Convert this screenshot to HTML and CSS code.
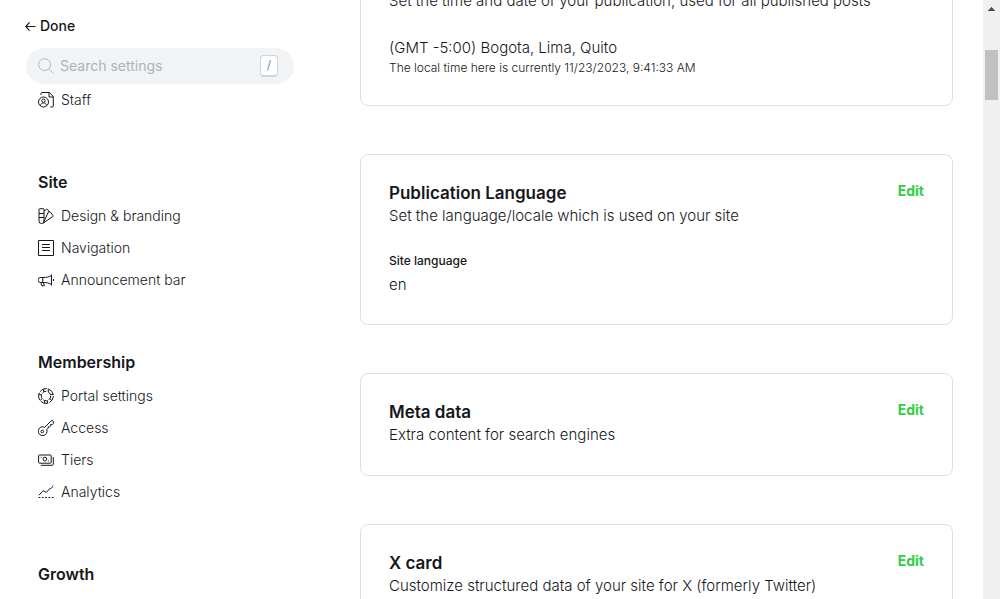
FILE: index.html
```html
<!DOCTYPE html>
<html lang="en">
<head>
<meta charset="utf-8">
<meta name="viewport" content="width=device-width, initial-scale=1">
<title>Settings</title>
<link rel="stylesheet" href="styles.css">
</head>
<body>
<div class="app">
  <aside class="sidebar">
    <button class="done" type="button">
      <svg class="done-icon" viewBox="0 0 12 12" aria-hidden="true"><path d="M11.500 6H.8M5 1.500.8 6 5 10.500"/></svg>
      Done
    </button>
    <label class="search">
      <svg class="search-icon" viewBox="0 0 17 17" aria-hidden="true"><circle cx="7" cy="7" r="6.3"/><path d="m11.6 11.6 4.8 4.8"/></svg>
      <input class="search-input" type="text" placeholder="Search settings" aria-label="Search settings">
      <kbd class="search-key">/</kbd>
    </label>
    <nav class="nav">
      <section class="nav-group">
        <a class="nav-item" href="#staff">
          <svg class="icon" viewBox="0 0 16 16" aria-hidden="true"><path d="M3 3V1.5a1 1 0 0 1 1-1h7.3l4 4V14a1 1 0 0 1-1 1h-2M11 .5V5h4.500"/><circle cx="5.500" cy="10" r="5"/><circle cx="5.500" cy="8.700" r="1.700"/><path d="M2.500 13.600c.4-2 1.500-2.700 3-2.700s2.600.7 3 2.700"/></svg>
          Staff
        </a>
      </section>
      <section class="nav-group">
        <h2 class="nav-title">Site</h2>
        <a class="nav-item" href="#design">
          <svg class="icon" viewBox="0 0 16 16" aria-hidden="true"><path d="M1 1.500a.8.8 0 0 1 .8-.8h3.400a.8.8 0 0 1 .8.8V13a2.500 2.500 0 0 1-5 0zM1 5.500h5M1 9.500h5M6 3l2.600-1.700a.8.8 0 0 1 1.100.2l1 1.800L5.600 14.400M10.700 3.900l1.500-.1 2.800 3.800a.8.8 0 0 1-.1 1L5 15.200"/><path d="M3.500 12.800v.4"/></svg>
          Design &amp; branding
        </a>
        <a class="nav-item" href="#navigation">
          <svg class="icon" viewBox="0 0 16 16" aria-hidden="true"><path d="M.5.5h15v15H.5zM4 4.500h8M4 7.500h8M4 10.500h8"/></svg>
          Navigation
        </a>
        <a class="nav-item" href="#announcement">
          <svg class="icon" viewBox="0 0 16 16" aria-hidden="true"><path d="M13.500 2.500v11M13.500 3.400C11 5.200 8 5.500 5 5.500H2.500a2.200 2.200 0 0 0 0 5H5c3 0 6 .3 8.500 2.100M4.800 5.500v5M2.800 10.500l1 3.300h2.600l-1-3.300M15.500 7v2"/></svg>
          Announcement bar
        </a>
      </section>
      <section class="nav-group">
        <h2 class="nav-title">Membership</h2>
        <a class="nav-item" href="#portal">
          <svg class="icon" viewBox="0 0 16 16" aria-hidden="true"><circle cx="8" cy="8" r="7.400" stroke-dasharray="7.900 1.400"/><circle cx="8" cy="8" r="4.700" stroke-dasharray="4.200 1.700"/><path d="M5.700.9v3M10.300.9v3M.8 6.300l2.700.6M15.200 6.300l-2.700.6M2.200 12.300l2.200-1.700M13.800 12.300l-2.200-1.700M6.600 15v-2.600M9.400 15v-2.600"/></svg>
          Portal settings
        </a>
        <a class="nav-item" href="#access">
          <svg class="icon" viewBox="0 0 16 16" aria-hidden="true"><path d="M6.700 7.300 13 1a1.500 1.500 0 0 1 2.300.3v2.200l-1 1h-1.600V6l-1 .8h-1.500v1.500l-1.500 1.200a4.400 4.400 0 1 1-2-2.200z"/><circle cx="4.300" cy="11.500" r="1.300"/></svg>
          Access
        </a>
        <a class="nav-item" href="#tiers">
          <svg class="icon" viewBox="0 0 16 16" aria-hidden="true"><rect x=".6" y="3" width="12.600" height="8.200" rx=".8"/><circle cx="6.900" cy="7.100" r="1.900"/><path d="M2.800 5.200h.8M10.200 9h.8M15.300 5v7.300a1 1 0 0 1-1 1H2.800"/></svg>
          Tiers
        </a>
        <a class="nav-item" href="#analytics">
          <svg class="icon" viewBox="0 0 16 16" aria-hidden="true"><path d="m1 11.200 3.300-3.800a1.300 1.300 0 0 1 1.600-.3l1.700.9a1.300 1.300 0 0 0 1.700-.4l1.500-2.200a2 2 0 0 1 1.200-.7c1.200-.2 2-1 2.500-2.200L15 1.500"/><path d="M.5 13.500h15" stroke-dasharray="1.800 1.500"/></svg>
          Analytics
        </a>
      </section>
      <section class="nav-group">
        <h2 class="nav-title">Growth</h2>
      </section>
    </nav>
  </aside>

  <main class="content">
    <section class="card card-scrolled">
      <div class="card-body">
        <p class="card-text">Set the time and date of your publication, used for all published posts</p>
        <div class="field">
          <p class="field-value">(GMT -5:00) Bogota, Lima, Quito</p>
          <p class="field-hint">The local time here is currently 11/23/2023, 9:41:33 AM</p>
        </div>
      </div>
    </section>
    <section class="card">
      <div class="card-body">
        <h2 class="card-title">Publication Language</h2>
        <p class="card-text">Set the language/locale which is used on your site</p>
        <div class="field">
          <h3 class="field-label">Site language</h3>
          <p class="field-value">en</p>
        </div>
      </div>
      <button class="edit" type="button">Edit</button>
    </section>
    <section class="card">
      <div class="card-body">
        <h2 class="card-title">Meta data</h2>
        <p class="card-text">Extra content for search engines</p>
      </div>
      <button class="edit" type="button">Edit</button>
    </section>
    <section class="card">
      <div class="card-body">
        <h2 class="card-title">X card</h2>
        <p class="card-text">Customize structured data of your site for X (formerly Twitter)</p>
      </div>
      <button class="edit" type="button">Edit</button>
    </section>
  </main>

  <div class="scrollbar" aria-hidden="true">
    <svg class="scroll-arrow" viewBox="0 0 17 17"><path d="M8 7h1v1h1v1h1v1h1v1H5v-1h1V9h1V8h1z"/></svg>
    <div class="scroll-track"><div class="scroll-thumb"></div></div>
    <svg class="scroll-arrow" viewBox="0 0 17 17"><path d="M5 7h7v1h-1v1h-1v1H9v1H8v-1H7V9H6V8H5z"/></svg>
  </div>
</div>
</body>
</html>
```

FILE: styles.css
```css
* {
  box-sizing: border-box;
}

body,
h2,
h3,
p {
  margin: 0;
}

body {
  font-family: Inter, "Liberation Sans", sans-serif;
  font-size: 14px;
  color: #15171a;
  background: #fff;
}

button {
  padding: 0;
  border: 0;
  background: none;
  font: inherit;
  color: inherit;
  cursor: pointer;
}

.app {
  display: grid;
  grid-template-columns: 294px minmax(0, 1fr) 17px;
  height: 100vh;
  overflow: hidden;
}

/* Sidebar */
.sidebar {
  padding: 16px 0 0 25px;
}

.done {
  display: flex;
  align-items: center;
  gap: 4px;
  height: 20px;
  font-weight: 500;
  line-height: 20px;
}

.done-icon {
  width: 11px;
  height: 11px;
  fill: none;
  stroke: currentColor;
  stroke-width: 1.3;
}

.search {
  display: flex;
  align-items: center;
  gap: 6px;
  height: 36px;
  margin-top: 12px;
  margin-left: 1px;
  padding: 0 16px 0 12px;
  border-radius: 18px;
  background: #f1f3f4;
}

.search-icon {
  flex: none;
  width: 16px;
  height: 16px;
  fill: none;
  stroke: #abb4be;
}

.search-input {
  flex: 1;
  min-width: 0;
  padding: 0;
  border: 0;
  outline: 0;
  background: none;
  font: inherit;
  line-height: 20px;
}

.search-input::placeholder {
  color: #abb4be;
  opacity: 1;
}

.search-key {
  width: 18px;
  height: 22px;
  border: 1px solid #ced4d9;
  border-bottom-width: 2px;
  border-radius: 4px;
  background: #fff;
  font: 12px/18px Inter, sans-serif;
  text-align: center;
  color: #7c8b9a;
}

.nav {
  display: flex;
  flex-direction: column;
  gap: 54px;
  padding-left: 13px;
}

.nav-title {
  margin-bottom: 6px;
  font-size: 16px;
  font-weight: 600;
  line-height: 24px;
}

.nav-item {
  display: flex;
  align-items: center;
  gap: 7px;
  height: 32px;
  font-weight: 300;
  line-height: 16px;
  color: inherit;
  text-decoration: none;
}

.icon {
  width: 16px;
  height: 16px;
  fill: none;
  stroke: currentColor;
}

/* Settings cards */
.content {
  display: flex;
  flex-direction: column;
  gap: 48px;
  padding: 0 30px 0 66px;
}

.card {
  display: flex;
  flex: none;
  align-items: flex-start;
  justify-content: space-between;
  padding: 28px;
  border: 1px solid #dddfe2;
  border-radius: 8px;
}

.card-scrolled {
  margin-top: -40px;
}

.card-title {
  margin-bottom: 1px;
  font-size: 17px;
  font-weight: 600;
  line-height: 20px;
}

.card-text {
  font-size: 15px;
  font-weight: 300;
  line-height: 24px;
}

.field {
  margin-top: 24px;
}

.field-label {
  margin-bottom: 4px;
  font-size: 12px;
  font-weight: 500;
  line-height: 18px;
}

.field-value {
  font-size: 15px;
  font-weight: 300;
  line-height: 22px;
}

.field-hint {
  font-size: 12px;
  font-weight: 300;
  line-height: 18px;
}

.edit {
  font-weight: 700;
  line-height: 16px;
  color: #30cf43;
}

/* Scrollbar */
.scrollbar {
  display: flex;
  flex-direction: column;
  background: #f0f0f0;
}

.scroll-arrow {
  flex: none;
  width: 17px;
  height: 17px;
  fill: #505050;
}

.scroll-track {
  flex: 1;
  padding: 33px 2px 0;
}

.scroll-thumb {
  height: 50px;
  background: #c1c1c1;
}
```
